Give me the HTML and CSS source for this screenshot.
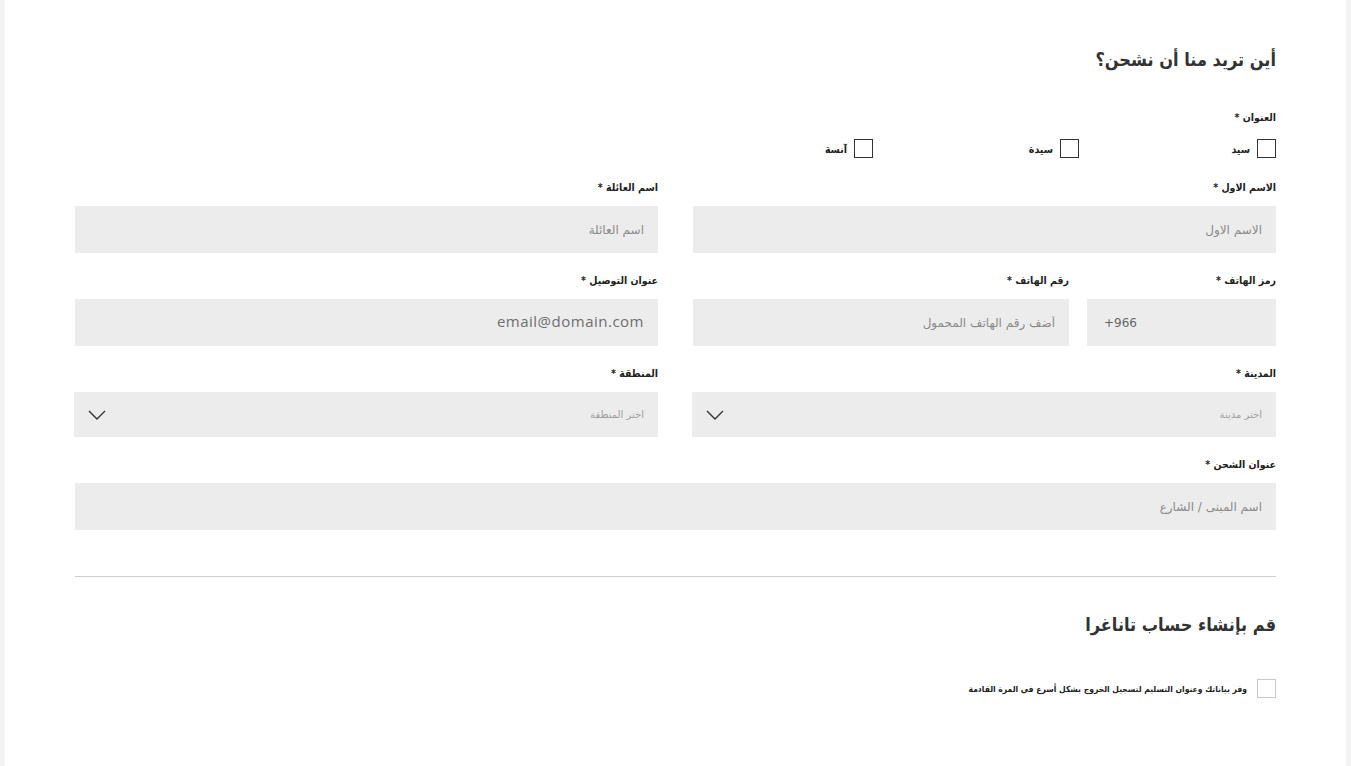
FILE: index.html
```html
<!DOCTYPE html>
<html lang="ar" dir="rtl">
<head>
    <meta charset="UTF-8">
    <title>الشحن</title>
    <link rel="stylesheet" href="styles.css">
</head>
<body>

<div class="page">
    <form class="shipping">
        <h2 class="section-title">أين تريد منا أن نشحن؟</h2>

        <div class="label">العنوان *</div>
        <div class="titles">
            <label class="check"><span class="box"></span>سيد</label>
            <label class="check"><span class="box"></span>سيدة</label>
            <label class="check"><span class="box"></span>آنسة</label>
        </div>

        <div class="grid">
            <div class="field">
                <div class="label">الاسم الاول *</div>
                <input class="input" type="text" placeholder="الاسم الاول">
            </div>
            <div class="field">
                <div class="label">اسم العائلة *</div>
                <input class="input" type="text" placeholder="اسم العائلة">
            </div>

            <div class="phone-row">
                <div class="field code">
                    <div class="label">رمز الهاتف *</div>
                    <input class="input ltr" type="text" value="+966">
                </div>
                <div class="field number">
                    <div class="label">رقم الهاتف *</div>
                    <input class="input" type="text" placeholder="أضف رقم الهاتف المحمول">
                </div>
            </div>
            <div class="field">
                <div class="label">عنوان التوصيل *</div>
                <input class="input email" type="text" placeholder="email@domain.com">
            </div>

            <div class="field">
                <div class="label">المدينة *</div>
                <div class="select">
                    <span>اختر مدينة</span>
                    <svg width="18" height="10" viewBox="0 0 18 10"><path d="M1 1 L9 9 L17 1" fill="none" stroke="#333" stroke-width="1.4"/></svg>
                </div>
            </div>
            <div class="field">
                <div class="label">المنطقة *</div>
                <div class="select">
                    <span>اختر المنطقة</span>
                    <svg width="18" height="10" viewBox="0 0 18 10"><path d="M1 1 L9 9 L17 1" fill="none" stroke="#333" stroke-width="1.4"/></svg>
                </div>
            </div>

            <div class="field full">
                <div class="label">عنوان الشحن *</div>
                <input class="input" type="text" placeholder="اسم المبنى / الشارع">
            </div>
        </div>

        <hr class="divider">

        <h2 class="section-title second">قم بإنشاء حساب تاناغرا</h2>

        <label class="check save"><span class="box light"></span>وفر بياناتك وعنوان التسليم لتسجيل الخروج بشكل أسرع في المرة القادمة</label>
    </form>
</div>

</body>
</html>
```

FILE: styles.css
```css
body {
    margin: 0;
    background-color: #f3f3f3;
    font-family: 'DejaVu Sans Condensed', 'DejaVu Sans', sans-serif;
    color: #333;
}
.page {
    margin: 0 5px;
    background-color: #fff;
    min-height: 766px;
}
.shipping {
    padding: 48px 70px 40px 70px;
}
.section-title {
    margin: 0;
    font-size: 18px;
    line-height: 24px;
    font-weight: bold;
    color: #333;
}
.label {
    font-size: 10.5px;
    line-height: 14px;
    font-weight: bold;
    color: #222;
    margin-bottom: 12px;
}
.section-title + .label {
    margin-top: 38px;
    margin-bottom: 15px;
}
.titles {
    display: grid;
    grid-template-columns: 197px 206px 206px;
    margin-bottom: 22px;
}
.check {
    display: flex;
    align-items: center;
    gap: 7px;
    font-size: 10.5px;
    font-weight: bold;
    color: #222;
}
.box {
    width: 17px;
    height: 17px;
    border: 1px solid #333;
    flex-shrink: 0;
}
.box.light {
    border-color: #c8c8c8;
}
.grid {
    display: grid;
    grid-template-columns: 1fr 1fr;
    column-gap: 35px;
}
.field {
    margin-bottom: 20px;
}
.full {
    grid-column: 1 / 3;
    margin-bottom: 0;
}
.phone-row {
    display: grid;
    grid-template-columns: 189px 1fr;
    column-gap: 18px;
}
.input {
    display: block;
    box-sizing: border-box;
    width: 100%;
    height: 47px;
    border: none;
    background-color: #ececec;
    padding: 0 14px;
    font-family: 'DejaVu Sans', sans-serif;
    font-size: 12px;
    color: #555;
    outline: none;
}
.input::placeholder {
    color: #8a8a8a;
}
.ltr {
    direction: ltr;
    text-align: left;
    padding-left: 17px;
    color: #666;
}
.email::placeholder {
    font-family: 'Open Sans', sans-serif;
    font-size: 15px;
    letter-spacing: 0.5px;
    color: #6e6e6e;
}
.select {
    display: flex;
    align-items: center;
    justify-content: space-between;
    height: 45px;
    background-color: #ececec;
    padding: 0 14px;
    margin-left: -1px;
    font-family: 'DejaVu Sans', sans-serif;
    font-size: 10px;
    color: #a0a0a0;
}
.divider {
    border: none;
    border-top: 1px solid #cfcfcf;
    margin: 46px 0 36px 0;
}
.section-title.second {
    margin-bottom: 42px;
}
.save {
    gap: 10px;
    font-size: 8.5px;
}
```
